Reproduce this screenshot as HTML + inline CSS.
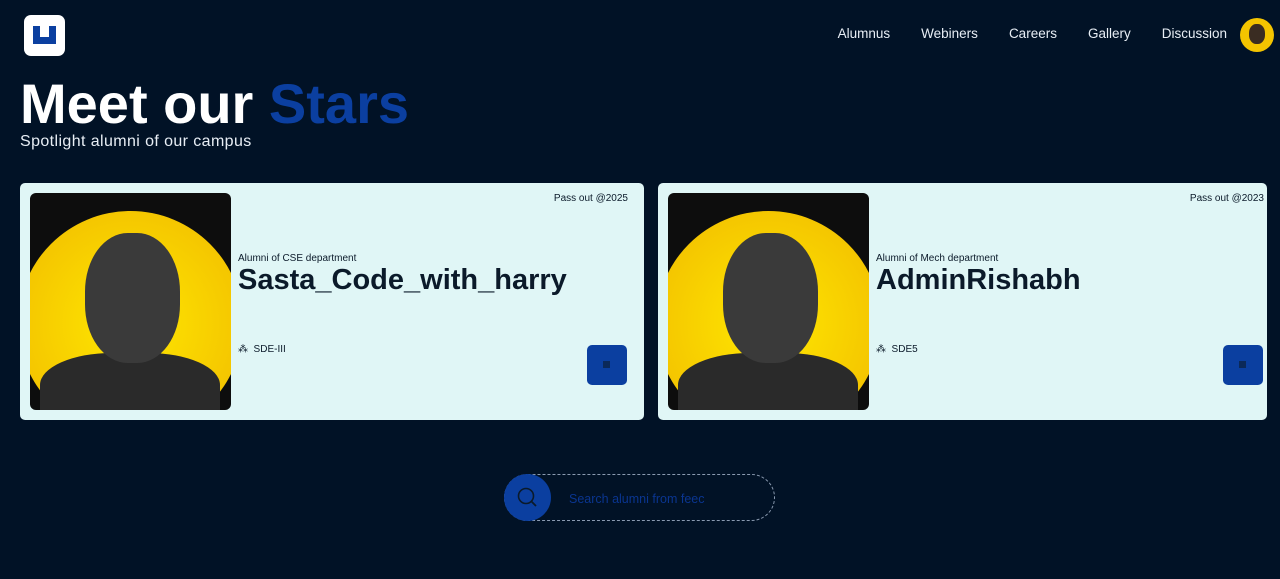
<!DOCTYPE html>
<html><head><meta charset="utf-8"><style>
*{margin:0;padding:0;box-sizing:border-box}
body{width:1280px;height:579px;background:#011226;font-family:"Liberation Sans",sans-serif;color:#fff;position:relative;overflow:hidden}
.logo{position:absolute;left:24px;top:15px;width:41px;height:41px;background:#fff;border-radius:7px}
.logo .u{position:absolute;left:9px;top:11px;width:23px;height:18px;background:#0b3fa0}
.logo .u:after{content:"";position:absolute;left:7px;top:0;width:9px;height:11px;background:#fff}
nav{position:absolute;top:26px;right:53px;font-size:13.5px;display:flex;gap:31px;color:#e8eef5}
.av{position:absolute;left:1240px;top:18px;width:34px;height:34px;border-radius:50%;background:#f4c400;overflow:hidden}
.av:after{content:"";position:absolute;left:9px;top:6px;width:16px;height:20px;border-radius:45%;background:#3a2c22}
h1{position:absolute;left:20px;top:76px;font-size:56px;line-height:1;font-weight:700}
h1 span{color:#0b3fa0}
.sub{position:absolute;left:20px;top:133px;font-size:16px;letter-spacing:.4px;color:#e8eef5}
.card{position:absolute;top:183px;height:237px;background:#e0f6f6;border-radius:5px;color:#0b1a2a}
.photo{position:absolute;left:10px;top:10px;width:201px;height:217px;background:#0d0d0d;border-radius:6px;overflow:hidden}
.photo .sun{position:absolute;left:-12px;top:18px;width:225px;height:225px;border-radius:50%;background:radial-gradient(circle,#ffe800,#f0b800)}
.photo .head{position:absolute;left:55px;top:40px;width:95px;height:130px;border-radius:45%;background:#3a3a3a}
.photo .body{position:absolute;left:10px;top:160px;width:180px;height:80px;border-radius:40% 40% 0 0;background:#2a2a2a}
.pass{position:absolute;top:10px;right:16px;font-size:10px}
.dept{position:absolute;left:218px;top:70px;font-size:10px}
.name{position:absolute;left:218px;top:81px;font-size:29px;font-weight:700}
.role{position:absolute;left:218px;top:161px;font-size:10px}
.btn{position:absolute;right:17px;top:162px;width:40px;height:40px;background:#0b3fa0;border-radius:5px}
.btn:after{content:"";position:absolute;left:16px;top:16px;width:7px;height:7px;background:#0b1a2a;opacity:.6}
.search{position:absolute;left:504px;top:474px;width:271px;height:47px;border:1.5px dashed #8a9ab0;border-radius:24px}
.sbtn{position:absolute;left:504px;top:474px;width:47px;height:47px;border-radius:50%;background:#0b3fa0}
.ph{position:absolute;left:569px;top:492px;font-size:12.5px;color:#0a3590}
</style></head><body>
<div class="logo"><div class="u"></div></div>
<nav><span>Alumnus</span><span>Webiners</span><span>Careers</span><span>Gallery</span><span>Discussion</span></nav>
<div class="av"></div>
<h1>Meet our <span>Stars</span></h1>
<div class="sub">Spotlight alumni of our campus</div>

<div class="card" style="left:20px;width:624px">
<div class="photo"><div class="sun"></div><div class="body"></div><div class="head"></div></div>
<div class="pass">Pass out @2025</div>
<div class="dept">Alumni of CSE department</div>
<div class="name">Sasta_Code_with_harry</div>
<div class="role">⁂&nbsp; SDE-III</div>
<div class="btn"></div>
</div>

<div class="card" style="left:658px;width:609px">
<div class="photo"><div class="sun"></div><div class="body"></div><div class="head"></div></div>
<div class="pass" style="right:3px">Pass out @2023</div>
<div class="dept">Alumni of Mech department</div>
<div class="name">AdminRishabh</div>
<div class="role">⁂&nbsp; SDE5</div>
<div class="btn" style="right:4px"></div>
</div>

<div class="search"></div>
<div class="sbtn"><svg width="47" height="47" viewBox="0 0 47 47"><circle cx="22" cy="22" r="7.5" fill="none" stroke="#0b1a2a" stroke-width="1.6"/><line x1="27.5" y1="27.5" x2="32" y2="32" stroke="#0b1a2a" stroke-width="1.8"/></svg></div>
<div class="ph">Search alumni from feec</div>
</body></html>
